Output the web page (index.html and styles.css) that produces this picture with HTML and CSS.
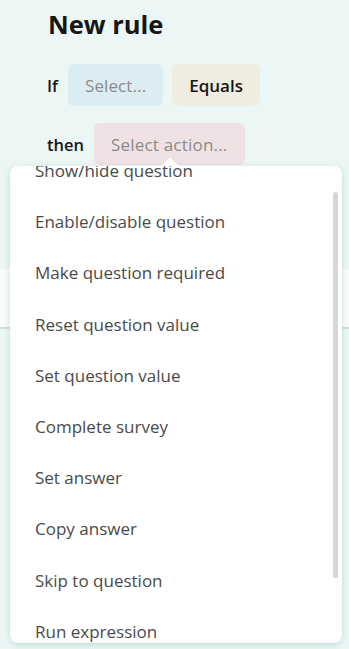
FILE: index.html
```html
<!DOCTYPE html>
<html lang="en">
<head>
  <meta charset="UTF-8" />
  <meta name="viewport" content="width=device-width, initial-scale=1.0" />
  <title>New rule</title>
  <link rel="stylesheet" href="styles.css">
</head>
<body>
  <div class="page">
    <h1 class="title">New rule</h1>

    <div class="rule-row">
      <span class="label">If</span>
      <span class="chip chip-blue">Select...</span>
      <span class="chip chip-sand">Equals</span>
    </div>

    <div class="rule-row then-row">
      <span class="label">then</span>
      <span class="chip chip-pink">Select action...</span>
    </div>

    <div class="behind-card"></div>

    <div class="popup">
      <div class="popup-arrow"></div>
      <div class="popup-scroll">
        <ul class="action-list">
          <li>Show/hide question</li>
          <li>Enable/disable question</li>
          <li>Make question required</li>
          <li>Reset question value</li>
          <li>Set question value</li>
          <li>Complete survey</li>
          <li>Set answer</li>
          <li>Copy answer</li>
          <li>Skip to question</li>
          <li>Run expression</li>
        </ul>
      </div>
      <div class="scrollbar"></div>
    </div>
  </div>
</body>
</html>
```

FILE: styles.css
```css
html, body {
  margin: 0;
  height: 100%;
}
body {
  font-family: 'Open Sans', 'Noto Sans', sans-serif;
  background: #ecf7f5;
  color: #161616;
  overflow: hidden;
}
.page {
  position: relative;
  height: 100%;
  padding: 6px 0 0 47px;
  box-sizing: border-box;
}
.title {
  margin: 0;
  font-size: 25.5px;
  font-weight: 700;
  line-height: 36px;
  padding-left: 1px;
}
.rule-row {
  display: flex;
  align-items: center;
  margin-top: 22px;
  height: 42px;
}
.then-row {
  margin-top: 17px;
}
.label {
  font-size: 16.5px;
  font-weight: 600;
  color: #161616;
}
.chip {
  display: inline-flex;
  align-items: center;
  height: 42px;
  box-sizing: border-box;
  padding: 0 17px;
  border-radius: 6px;
  font-size: 17px;
}
.chip-blue {
  background: #dcecf3;
  color: #8a8a8a;
  margin-left: 10px;
  letter-spacing: 0.1px;
}
.chip-sand {
  background: #eeede0;
  color: #161616;
  font-weight: 600;
  margin-left: 9px;
}
.chip-pink {
  background: #efe1e4;
  color: #8a8a8a;
  margin-left: 10px;
  letter-spacing: 0.2px;
}
.behind-card {
  margin: 104px 0 0 -47px;
  height: 58px;
  background: #fafcfc;
  border-bottom: 2px solid #dcdcdc;
}
.popup {
  position: absolute;
  left: 10px;
  top: 166px;
  width: 332px;
  height: 477px;
  background: #fff;
  border-radius: 8px;
  box-shadow: 0 2px 6px rgba(60, 140, 130, 0.25);
}
.popup-arrow {
  position: absolute;
  left: 154px;
  top: -6px;
  width: 12px;
  height: 12px;
  background: #fff;
  transform: rotate(45deg);
}
.popup-scroll {
  position: relative;
  height: 100%;
  overflow: hidden;
  border-radius: 8px;
}
.action-list {
  list-style: none;
  margin: -21px 0 0;
  padding: 0;
}
.action-list li {
  height: 51.2px;
  line-height: 51.2px;
  padding-left: 25px;
  font-size: 17px;
  color: #4a4a4a;
  white-space: nowrap;
}
.scrollbar {
  position: absolute;
  right: 4px;
  top: 26px;
  width: 5px;
  height: 386px;
  border-radius: 3px;
  background: #d6d6d6;
}
```
